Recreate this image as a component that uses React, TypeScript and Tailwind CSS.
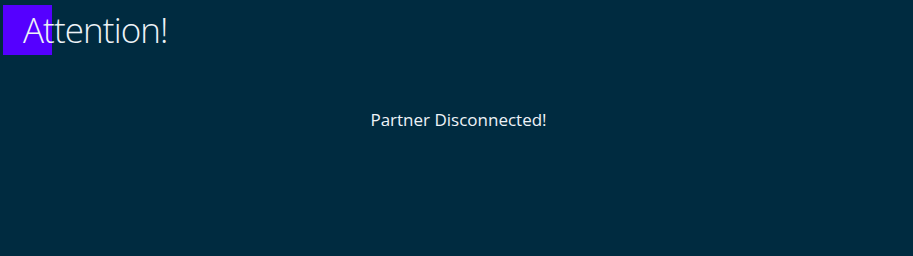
export default function App() {
  return (
    <div className="relative w-[913px] h-[256px] bg-[#002b40] overflow-hidden" style={{ fontFamily: '"Open Sans", "Noto Sans", sans-serif' }}>
      <div className="absolute left-[3px] top-[5px] w-[49px] h-[50px] bg-[#5500ff]" />
      <h1 className="relative pl-[23px] pt-[6px] text-[35px] leading-[48px] font-light text-[#eef3f8] tracking-[-0.9px]">Attention!</h1>
      <div className="flex justify-center pt-[55px] pl-[4px]">
        <p className="text-[17px] leading-[22px] text-[#eef3f8]">Partner Disconnected!</p>
      </div>
    </div>
  );
}
